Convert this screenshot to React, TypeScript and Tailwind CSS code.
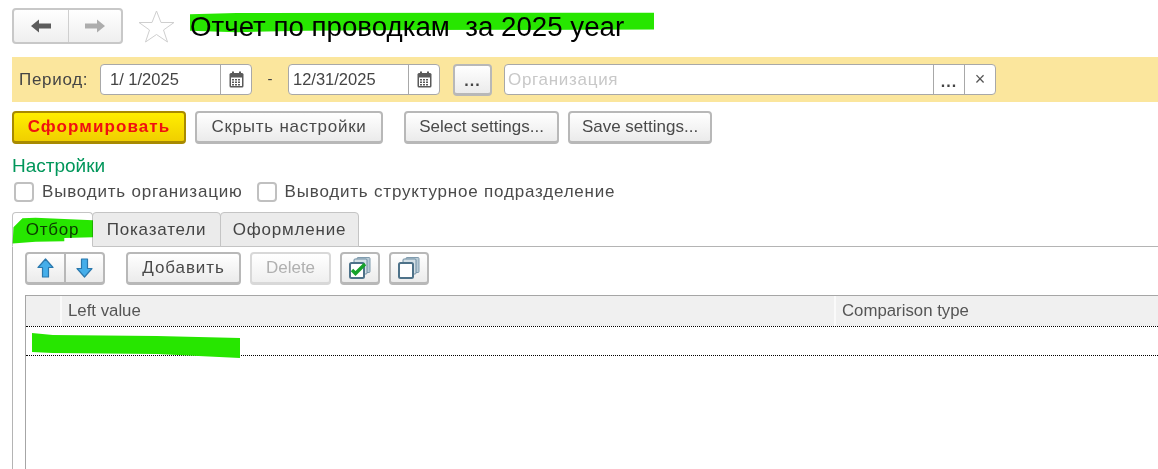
const btn =
  "flex items-center justify-center rounded-[4px] border-2 border-[#b8b8b8] border-b-[3px] bg-gradient-to-b from-white to-[#ebebeb] text-[17px] text-[#4a4a4a]";

function Scribble({ className, d }: { className: string; d: string }) {
  return (
    <svg className={className} viewBox="0 0 100 100" preserveAspectRatio="none">
      <path d={d} fill="#27e600" />
    </svg>
  );
}

function CalendarIcon() {
  return (
    <svg width="15" height="17" viewBox="0 0 15 17">
      <rect x="0.5" y="2" width="14" height="14.5" rx="1.5" fill="#5a5a5a" />
      <rect x="3" y="0.5" width="2" height="3" fill="#5a5a5a" />
      <rect x="10" y="0.5" width="2" height="3" fill="#5a5a5a" />
      <rect x="2" y="6.5" width="11" height="8.5" fill="#fff" />
      {[3, 6, 9].map((x) =>
        [8, 10.5, 13].map((y) => (
          <rect key={`${x}-${y}`} x={x} y={y} width="2" height="1.5" fill="#5a5a5a" />
        ))
      )}
    </svg>
  );
}

function DateField({ value, pad }: { value: string; pad: string }) {
  return (
    <div className="flex h-[31px] w-[152px] items-center rounded-[4px] border border-[#a8a8a8] bg-white">
      <span className={`flex-1 text-[16.5px] text-[#444] ${pad}`}>{value}</span>
      <span className="flex h-full w-[31px] items-center justify-center border-l border-[#a8a8a8]">
        <CalendarIcon />
      </span>
    </div>
  );
}

function Dots() {
  return <span className="mt-1 text-[16px] font-bold leading-none tracking-[1px] text-[#444]">...</span>;
}

function Check({ label }: { label: string }) {
  return (
    <label className="flex items-center gap-2">
      <span className="h-[20px] w-[20px] rounded-[4px] border-2 border-[#c0c0c0] bg-white" />
      <span className="text-[17px] tracking-[0.8px] text-[#4a4a4a]">{label}</span>
    </label>
  );
}

function StackIcon({ checked }: { checked?: boolean }) {
  return (
    <svg width="24" height="24" viewBox="0 0 24 24">
      <rect x="9" y="1.5" width="13" height="15" rx="1" fill="#b9cbd6" stroke="#7f9bae" />
      <rect x="6" y="3" width="13" height="15" rx="1" fill="#d5e0e6" stroke="#6f8ea3" />
      <rect x="2" y="7" width="14" height="15" rx="1.5" fill="#fff" stroke="#4e7289" strokeWidth="2" />
      {checked && (
        <path d="M4 14l3.5 3.5L17 8" fill="none" stroke="#16a32a" strokeWidth="3.4" />
      )}
    </svg>
  );
}

function ArrowIcon({ down }: { down?: boolean }) {
  return (
    <svg width="17" height="20" viewBox="0 0 17 20" className={down ? "rotate-180" : ""}>
      <path
        d="M8.5 1L16 9.5H11.5V19H5.5V9.5H1Z"
        fill="#45aeea"
        stroke="#2a78ad"
        strokeWidth="1.2"
        strokeLinejoin="round"
      />
    </svg>
  );
}

function Tab({ label, width, active }: { label: string; width: string; active?: boolean }) {
  return (
    <div
      className={`flex h-[35px] items-center justify-center rounded-t-[4px] border border-[#c4c4c4] text-[17px] tracking-[0.8px] text-[#444] ${width} ${
        active ? "relative z-10 border-b-white bg-white" : "bg-[#ebebeb]"
      }`}
    >
      {label}
    </div>
  );
}

export default function App() {
  return (
    <div className="relative h-[469px] w-[1158px] overflow-hidden bg-white font-['Liberation_Sans',Arial,sans-serif]">
      {/* Title row */}
      <div className="flex items-start pl-3 pt-2">
        <div className="flex h-[36px] w-[111px] rounded-[4px] border-2 border-[#c8c8c8] bg-gradient-to-b from-white to-[#efefef]">
          <span className="flex w-[55px] items-center justify-center border-r border-[#cfcfcf]">
            <svg width="22" height="16" viewBox="0 0 22 16">
              <path d="M1 8L9 1.5V5.5H21V10.5H9V14.5Z" fill="#5c5c5c" />
            </svg>
          </span>
          <span className="flex flex-1 items-center justify-center">
            <svg width="22" height="16" viewBox="0 0 22 16">
              <path d="M21 8L13 1.5V5.5H1V10.5H13V14.5Z" fill="#adadad" />
            </svg>
          </span>
        </div>
        <svg className="ml-[15px] mt-[2px]" width="37" height="33" viewBox="0 0 37 33">
          <path
            d="M18.5 1L23 12.5H36L25.5 20L29.5 32L18.5 24.5L7.5 32L11.5 20L1 12.5H14Z"
            fill="#fff"
            stroke="#cfcfcf"
          />
        </svg>
        <h1 className="ml-[15px] mt-[3px] whitespace-pre text-[27.7px] font-normal leading-[32px] text-black">
          Отчет по проводкам  за 2025 year
        </h1>
      </div>

      {/* Period bar */}
      <div className="ml-3 mt-[13px] flex h-[45px] items-center bg-[#fbe69d] pl-[7px]">
        <span className="w-[81px] text-[17px] tracking-[0.7px] text-[#444]">Период:</span>
        <DateField value="1/ 1/2025" pad="pl-[9px]" />
        <span className="w-[36px] text-center text-[15px] text-[#444]">-</span>
        <DateField value="12/31/2025" pad="pl-[4px]" />
        <button className={`${btn} ml-[13px] h-[32px] w-[39px]`}>
          <Dots />
        </button>
        <div className="ml-[12px] flex h-[31px] w-[492px] items-center rounded-[4px] border border-[#a8a8a8] bg-white">
          <span className="flex-1 pl-[3px] text-[17px] tracking-[0.7px] text-[#c8c8c8]">Организация</span>
          <span className="flex h-full w-[31px] items-center justify-center border-l border-[#a8a8a8]">
            <Dots />
          </span>
          <span className="flex h-full w-[31px] items-center justify-center border-l border-[#a8a8a8] text-[18px] text-[#555]">
            ×
          </span>
        </div>
      </div>

      {/* Actions */}
      <div className="ml-3 mt-[9px] flex h-[33px]">
        <button className="flex w-[174px] items-center justify-center rounded-[4px] border-2 border-[#a88a00] border-b-[3px] bg-gradient-to-b from-[#ffee00] to-[#f0cf00] text-[17px] font-bold tracking-[1.1px] text-[#f01010]">
          Сформировать
        </button>
        <button className={`${btn} ml-[9px] w-[188px] tracking-[0.75px]`}>Скрыть настройки</button>
        <button className={`${btn} ml-[21px] w-[155px]`}>Select settings...</button>
        <button className={`${btn} ml-[9px] w-[144px]`}>Save settings...</button>
      </div>

      <div className="ml-3 mt-[11px] text-[19px] leading-[22px] text-[#00965a]">Настройки</div>

      <div className="ml-[14px] mt-[4px] flex h-[21px] gap-[14px]">
        <Check label="Выводить организацию" />
        <Check label="Выводить структурное подразделение" />
      </div>

      {/* Tabs */}
      <div className="ml-3 mt-[10px] flex">
        <Tab label="Отбор" width="w-[81px]" active />
        <Tab label="Показатели" width="w-[129px] -ml-px" />
        <Tab label="Оформление" width="w-[139px] -ml-px" />
      </div>

      {/* Tab panel */}
      <div className="-mt-px ml-3 h-[223px] border-l border-t border-[#b4b4b4] pl-3 pt-[5px]">
        <div className="flex h-[33px]">
          <div className="flex w-[80px] rounded-[4px] border-2 border-[#b8b8b8] border-b-[3px] bg-gradient-to-b from-white to-[#ebebeb]">
            <span className="flex w-[39px] items-center justify-center border-r-2 border-[#b8b8b8]">
              <ArrowIcon />
            </span>
            <span className="flex flex-1 items-center justify-center">
              <ArrowIcon down />
            </span>
          </div>
          <button className={`${btn} ml-[21px] w-[115px] tracking-[0.9px]`}>Добавить</button>
          <button className="ml-[9px] flex w-[81px] items-center justify-center rounded-[4px] border-2 border-[#d8d8d8] border-b-[3px] bg-gradient-to-b from-white to-[#efefef] text-[17px] text-[#b0b0b0]">
            Delete
          </button>
          <button className={`${btn} ml-[9px] w-[40px]`}>
            <StackIcon checked />
          </button>
          <button className={`${btn} ml-[9px] w-[40px]`}>
            <StackIcon />
          </button>
        </div>

        {/* Filter table */}
        <div className="mt-[10px] h-[174px] border-l border-t border-[#a6a6a6]">
          <div className="flex h-[30px] items-center bg-[#f0f0f0] text-[16.8px] text-[#555]">
            <span className="h-full w-[36px] border-r-2 border-[#fafafa]" />
            <span className="flex h-full w-[774px] items-center border-r-2 border-[#fafafa] pl-[6px]">
              Left value
            </span>
            <span className="pl-[6px]">Comparison type</span>
          </div>
          <div className="h-[30px] border-y border-dotted border-black bg-white" />
        </div>
      </div>

      {/* Marker strokes on top of the screenshot */}
      <Scribble
        className="absolute left-[190px] top-[12px] z-20 h-[22px] w-[464px] mix-blend-multiply"
        d="M0 10L10 5L100 3V80L50 82L25 85L10 92L0 85Z"
      />
      <Scribble
        className="absolute left-[11px] top-[217px] z-20 h-[27px] w-[82px] mix-blend-multiply"
        d="M14 5L30 3L100 12V75L65 78V90L30 92L2 98L3 38Z"
      />
      <Scribble
        className="absolute left-[32px] top-[333px] z-20 h-[25px] w-[208px]"
        d="M0 0L10 8L60 12L100 20V100L60 84L10 80L0 76Z"
      />
    </div>
  );
}
